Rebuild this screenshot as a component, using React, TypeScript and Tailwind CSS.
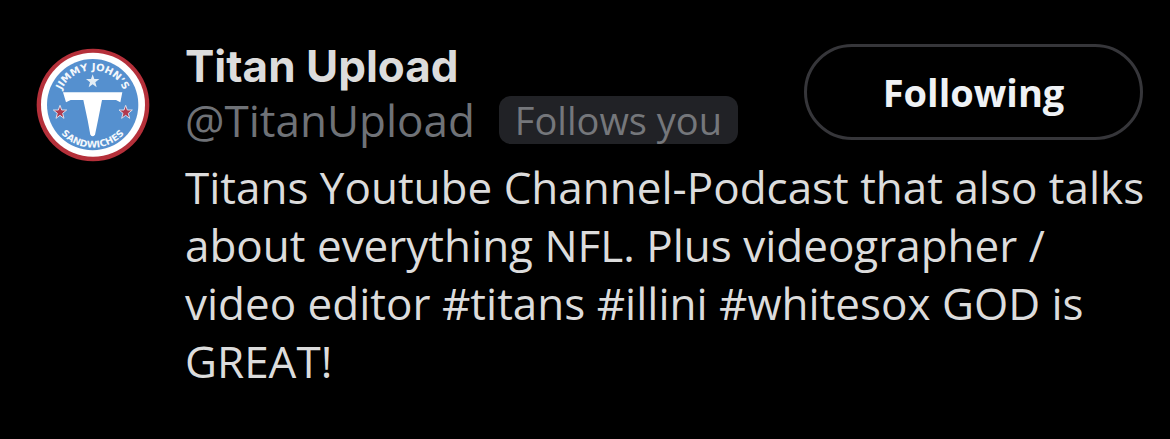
import React from 'react';

const STAR = 'M0 -21 L5 -7 L20 -7 L8 3 L12 18 L0 9 L-12 18 L-8 3 L-20 -7 L-5 -7 Z';

function Avatar() {
  return (
    <svg viewBox="20 23 342 342" role="img" aria-label="Titan Upload" className="size-[114px] shrink-0">
      <defs>
        <path id="badge-top" d="M87 193 A103 103 0 0 1 293 193" />
        <path id="badge-bottom" d="M61 193 A129 129 0 0 0 319 193" />
      </defs>
      <circle cx="191" cy="194" r="169" fill="#b5303a" />
      <circle cx="191" cy="193" r="156" fill="#ffffff" />
      <circle cx="190" cy="193" r="137" fill="#5590cf" />
      <g fill="#f4f8fc" className="font-['DejaVu_Sans',sans-serif] font-bold" textAnchor="middle">
        <text fontSize="30">
          <textPath href="#badge-top" startOffset="50%">JIMMY JOHN’S</textPath>
        </text>
        <text fontSize="28">
          <textPath href="#badge-bottom" startOffset="50%">SANDWICHES</textPath>
        </text>
      </g>
      <path d={STAR} transform="translate(190 123)" fill="#e3edf5" />
      <g fill="#b13a4e" stroke="#d9dfee" strokeWidth="3">
        <path d={STAR} transform="translate(92 216)" />
        <path d={STAR} transform="translate(289 216)" />
      </g>
      <path
        d="M101 156 H279 L273 186 L260 179 H218 L206 240 L197 283 Q190 293 183 283 L175 240 L162 179 H124 L110 186 Z"
        fill="#ffffff"
      />
    </svg>
  );
}

export default function App() {
  return (
    <main className="min-h-screen bg-black font-['Open_Sans',sans-serif] text-[#dcdcdc]">
      <article className="flex items-start gap-[35px] pt-11 pr-5 pb-12 pl-9">
        <div className="pt-1">
          <Avatar />
        </div>
        <div className="min-w-0 flex-1">
          <header className="flex items-start justify-between gap-4 pr-[7px]">
            <div>
              <h1 className="font-['Inter',sans-serif] text-[44px] leading-[44px] font-bold">Titan Upload</h1>
              <div className="flex items-center gap-6 pt-1">
                <a href="#profile" className="text-[44px] leading-[56px] text-[#6f7277]">
                  @TitanUpload
                </a>
                <span className="rounded-xl bg-[#212226] px-4 text-[38px] leading-[48px] text-[#75777b]">
                  Follows you
                </span>
              </div>
            </div>
            <button
              type="button"
              className="h-24 w-[339px] shrink-0 rounded-full border-3 border-[#36363a] text-[38px] leading-[48px] font-bold text-[#eff2f5]"
            >
              Following
            </button>
          </header>
          <p className="pt-[10px] text-[44px] leading-[58px]">
            Titans Youtube Channel-Podcast that also talks about everything NFL. Plus videographer / video editor
            #titans #illini #whitesox GOD is GREAT!
          </p>
        </div>
      </article>
    </main>
  );
}
